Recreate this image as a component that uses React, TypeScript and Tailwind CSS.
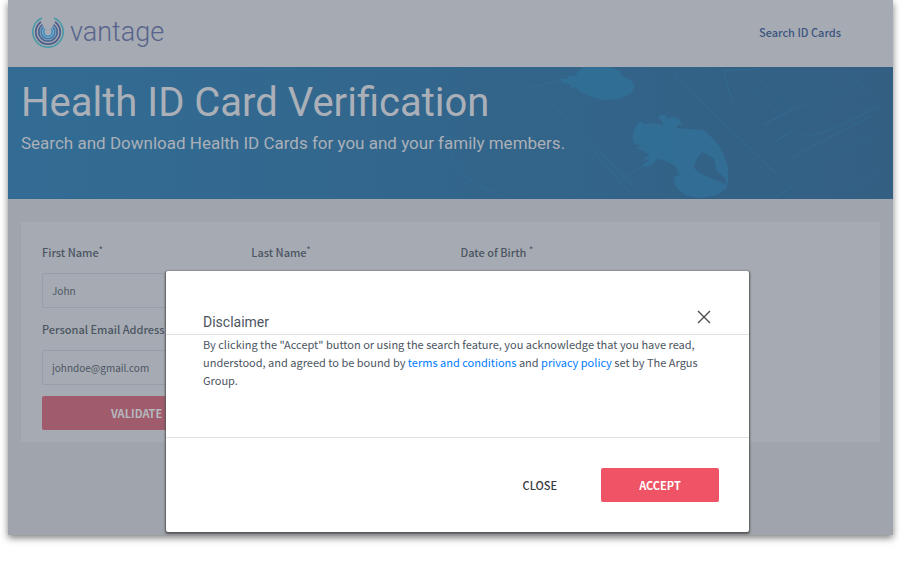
import type { InputHTMLAttributes } from "react";

type FieldProps = InputHTMLAttributes<HTMLInputElement> & {
  id: string;
  label: string;
};

function Field({ id, label, ...rest }: FieldProps) {
  return (
    <div className="flex flex-col gap-[11px]">
      <label htmlFor={id} className="text-[11px] leading-5 font-medium whitespace-nowrap">
        {label}
        <sup>*</sup>
      </label>
      <input
        id={id}
        className="h-[35px] w-full rounded-xs border border-[#989da7] px-[9px] text-[10px]"
        {...rest}
      />
    </div>
  );
}

function Logo() {
  return (
    <a href="#" className="flex items-center gap-[6px] text-[#57648c]">
      <svg viewBox="0 0 32 32" className="size-8" fill="none" strokeWidth="1.7">
        <path d="M10 2A15.2 15.2 0 1 0 22 2" stroke="#4b9aa5" />
        <path d="M9 6A12.2 12.2 0 1 0 23 6" stroke="#4f5b8a" />
        <path d="M10.500 8.600A9.200 9.200 0 1 0 21.500 8.600" stroke="#4a6796" />
        <path d="M11.500 10.900A6.800 6.800 0 1 0 20.500 10.900" stroke="#3b80b2" />
        <path d="M13 12.900A4.300 4.300 0 1 0 19 12.900" stroke="#3f92c2" />
      </svg>
      <span className="font-[Roboto,sans-serif] text-[27px] leading-8 font-light">vantage</span>
    </a>
  );
}

function BannerArt() {
  return (
    <svg
      viewBox="0 0 885 132"
      preserveAspectRatio="xMaxYMid slice"
      className="absolute inset-0 size-full"
      aria-hidden="true"
    >
      {/* continents */}
      <g transform="translate(542 -3) scale(.3333)" fill="#317098" fillRule="evenodd" opacity=".85">
        <path d="M100 9L180 9 206 20 222 38 242 48 254 62 248 84 212 104 164 109 118 97 88 82 78 70 60 74 64 62 38 56 26 42 50 46 58 32 76 36 84 22Z" />
        <path d="M247 225L252 195 270 172 284 180 300 177 325 180 340 184 334 168 322 162 330 154 345 152 352 164 370 158 386 166 398 180 384 182 380 192 425 196 462 199 490 225 508 246 522 274 535 315 534 350 528 374 500 394 450 402 410 395 386 378 375 362 370 340 388 332 376 306 345 290 322 284 308 300 290 308 276 304 296 290 282 284 300 272 280 262 262 254 270 244 250 238ZM456 264L476 274 492 284 500 320 527 345 527 360 490 346 448 326 430 310 440 285Z" />
      </g>
      {/* circuit lines */}
      <g transform="translate(592 -7) scale(.3333)" fill="none" stroke="#34739d">
        <g strokeWidth="3" opacity=".5">
          <path d="M65 355L130 318M220 45L560 370M580 375L530 412M370 32L395 118M370 32L480 26" />
          <path d="M490 195L590 140M525 245L575 215M610 222C640 232 680 220 830 140M580 290L810 170" />
          <path d="M0 275L110 390M-150 120L90 400M-450 280C-400 380-360 370-300 410M-230 90L-120 60M-190 270L-60 400" />
        </g>
        <g strokeWidth="2" opacity=".35">
          <path d="M400 30L600 230M450 30L620 200M520 30L680 200M590 30L720 170M660 30L780 150M740 30L830 130" />
          <path d="M430 110L590 40M470 150L700 50M520 180L800 50M630 320L830 220M740 390L850 330M650 300L800 230" />
        </g>
      </g>
    </svg>
  );
}

function DisclaimerDialog() {
  return (
    <div
      role="dialog"
      aria-labelledby="disclaimer-title"
      className="w-full max-w-[583px] rounded-xs bg-white text-[#4b5561] shadow-[0_1px_2px_1px_#555]"
    >
      <div className="flex items-end justify-between border-b border-[#dee2e6] pt-[37px] pr-9 pl-[37px]">
        <h2 id="disclaimer-title" className="font-[Roboto,sans-serif] text-sm leading-6">
          Disclaimer
        </h2>
        <button type="button" aria-label="Close dialog" className="pb-2">
          <svg viewBox="0 0 18 18" className="size-[18px]" fill="none" stroke="#4d4d4d" strokeWidth="1.4">
            <path d="M3 3L15 15M15 3L3 15" />
          </svg>
        </button>
      </div>
      <p className="min-h-[102px] pr-10 pl-[37px] text-[11px] leading-[18px]">
        By clicking the "Accept" button or using the search feature, you acknowledge that you have read,
        understood, and agreed to be bound by{" "}
        <a href="#terms" className="text-[#007bff]">terms and conditions</a> and{" "}
        <a href="#privacy" className="text-[#007bff]">privacy policy</a> set by The Argus Group.
      </p>
      <div className="flex items-center justify-end gap-11 border-t border-[#dee2e6] px-[30px] py-[30px]">
        <button type="button" className="text-[11px] font-medium text-[#343a40]">CLOSE</button>
        <button type="button" className="h-[34px] w-[118px] rounded-xs bg-[#ee5366] text-[11px] font-bold text-white">
          ACCEPT
        </button>
      </div>
    </div>
  );
}

export default function App() {
  return (
    <div className="bg-white pr-[7px] pb-8 pl-2 font-['Noto_Sans_CJK_SC',sans-serif]">
      <div className="relative bg-[#a0a5ad] pb-[93px] text-[#4c5562] shadow-[0_3px_7px_rgba(0,0,0,0.5)]">
        <header className="flex h-[67px] items-center justify-between bg-[#a6abb3] pr-[52px] pb-1 pl-6">
          <Logo />
          <nav className="flex text-[11px] leading-4 font-medium text-[#3c5480]">
            <a href="#search">Search ID Cards</a>
          </nav>
        </header>

        <section className="relative h-[132px] overflow-hidden bg-linear-to-r from-[#326c94] to-[#335f83] px-[13px] pt-3 font-[Roboto,sans-serif] text-[#abb0b8]">
          <BannerArt />
          <div className="relative">
            <h1 className="text-[40px] leading-[48px]">Health ID Card Verification</h1>
            <p className="text-[17px] leading-8">
              Search and Download Health ID Cards for you and your family members.
            </p>
          </div>
        </section>

        <main className="px-[13px] pt-[23px]">
          <form className="grid grid-cols-4 gap-x-5 gap-y-[11px] bg-[#a6abb3] px-[21px] pt-5 pb-3">
            <Field id="first-name" label="First Name" defaultValue="John" />
            <Field id="last-name" label="Last Name" />
            <Field id="birth-date" label="Date of Birth " />
            <div className="col-start-1">
              <Field id="email" label="Personal Email Address" type="email" defaultValue="johndoe@gmail.com" />
            </div>
            <button
              type="button"
              className="col-start-1 h-[34px] rounded-xs bg-[#a05c6c] text-[11px] font-bold text-[#b5b9c0]"
            >
              VALIDATE
            </button>
          </form>
        </main>

        {/* modal layer */}
        <div className="absolute inset-x-0 bottom-[3px] flex justify-center pl-[14px]">
          <DisclaimerDialog />
        </div>
      </div>
    </div>
  );
}
